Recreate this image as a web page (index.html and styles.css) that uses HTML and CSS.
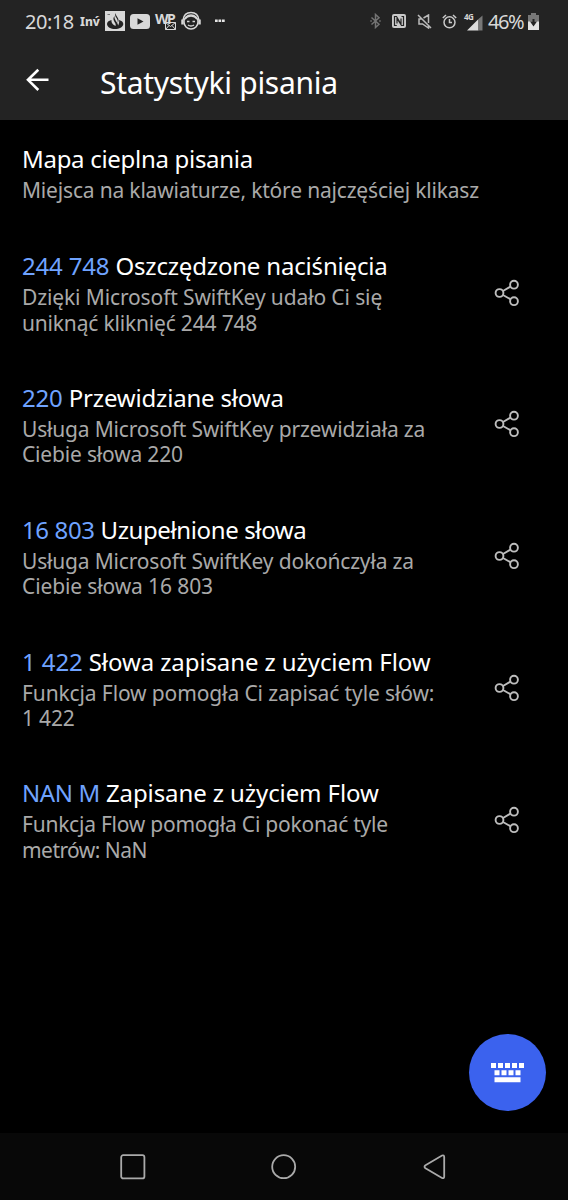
FILE: index.html
```html
<!DOCTYPE html>
<html lang="pl">
<head>
<meta charset="utf-8">
<title>Statystyki pisania</title>
<link rel="stylesheet" href="styles.css">
</head>
<body>
<svg class="defs" width="0" height="0">
  <symbol id="share" viewBox="0 0 26 28">
    <path d="M9 12 16.400 7.600M9 16 16.400 20.200"/>
    <circle cx="5.500" cy="14" r="3.900"/><circle cx="20" cy="5.700" r="3.900"/><circle cx="20" cy="22.200" r="3.900"/>
  </symbol>
</svg>
<div class="screen">
  <header class="top">
    <div class="status">
      <span class="clock">20:18</span>
      <span class="inv">Inv́</span>
      <svg class="app-a" width="20" height="20" viewBox="0 0 20 20"><path fill="#d8d8d8" d="M0 0h20v20H0z"/><path fill="#232323" d="M6.500 9C3.500 9.800 2 11 2 13c0 3 4 5 8 5s8.300-2 8.300-5c0-2-1.500-3.200-4.300-4 .5 2 0 3.500-.8 5.500C12.500 11 9 9 9.500 5 8 7 8 8.500 9.500 11c1 1.500 1.500 2.500 1 4-2-1-4.500-3-4-6z"/><path fill="#232323" d="M10.500 2c-1 2.500.3 4 1.300 5.500 1 1.500 1.200 3 .9 4.500 1.300-2 1-3.500 0-5.200-1-1.800-2-3-2.200-4.800z"/><path stroke="#777" d="M2.500 3.500h2.500"/></svg>
      <svg class="app-b" width="20" height="15" viewBox="0 0 20 15"><rect width="20" height="15" rx="3.500" fill="#d8d8d8"/><path fill="#232323" d="M7.500 4.300v6.400l6-3.200z"/></svg>
      <span class="wp"><b>WP</b><svg width="11" height="8" viewBox="0 0 11 8"><path fill="#232323" stroke="#d8d8d8" d="M.5.5h10v7H.5zL5.500 4.500 10.500.5M.5 7.500 4 3.500M10.500 7.500 7 3.500"/></svg></span>
      <svg class="face" width="20" height="20" viewBox="0 0 20 20" fill="none" stroke="#d8d8d8" stroke-width="1.500"><circle cx="10" cy="11" r="7"/><path d="M2 9Q3 1.500 10 1.500T18 9M4 8q2-3 6-3t6 3M6 10.500h2.500M11.500 10.500H14M7 14q3 2 6 0"/><path stroke-width="2.500" d="M1.500 8.500v5M18.500 8.500v5"/></svg>
      <svg class="more" width="10" height="4" viewBox="0 0 10 4" fill="#e5e5e5"><path d="M0 .5h2.700V3H0zM3.500.5h2.700V3H3.500zM7 .5h2.700V3H7z"/></svg>
      <div class="tray">
        <svg width="11" height="16" viewBox="0 0 11 16" fill="none" stroke="#747474" stroke-width="1.500"><path d="M1.500 4.500 9 11.300 5.500 14.500v-13L9 4.700 1.500 11.500M.3 8h1.500M9.200 8h1.500"/></svg>
        <svg class="nfc" width="14" height="14" viewBox="0 0 14 14"><rect width="14" height="14" rx="2" fill="#c9c9c9"/><path fill="none" stroke="#232323" stroke-width="1.200" d="M4.800 11.500H2.500v-9h2l4.500 7.500V4.500M9.500 2.500h2v9h-2L5 4.500V9.500"/></svg>
        <svg class="mute" width="15" height="15" viewBox="0 0 15 15" fill="none" stroke="#bbb" stroke-width="1.500"><path d="M1 1 14 14M4.500 5H2v5h3.500l6 4v-3M6.500 4l5-3v8"/></svg>
        <svg class="alarm" width="15" height="15" viewBox="0 0 15 15" fill="none" stroke="#c9c9c9" stroke-width="1.500"><circle cx="7.500" cy="8.300" r="5.500"/><path d="M.8 4 4 1M11 1l3.200 3M7.500 5v3.500H10"/></svg>
        <div class="signal"><span>4G</span><svg width="16" height="13" viewBox="0 0 16 13"><path fill="#ddd" d="M0 12.500 11.500 1v11.500z"/><path fill="#777" d="M11.500 1 15.500-2.500v15h-4z"/></svg></div>
        <span class="pct">46%</span>
        <svg class="battery" width="11" height="17" viewBox="0 0 11 17"><path fill="#777" d="M3 0h5v2h3v7H0V2h3z"/><path fill="#e1e1e1" d="M0 8.500h11V17H0z"/><path fill="#232323" d="M4.500 6h2v2.500H9L5.500 13.500 2 8.500h2.500z"/></svg>
      </div>
    </div>
    <div class="bar">
      <svg class="back" width="24" height="24" viewBox="0 0 24 24"><path d="M22.500 11.800H2M12.300 1.800 2 11.800 12.300 22"/></svg>
      <h1>Statystyki pisania</h1>
    </div>
  </header>
  <main>
    <section class="row first"><div><h2 class="snug">Mapa cieplna pisania</h2><p>Miejsca na klawiaturze, które najczęściej klikasz</p></div></section>
    <section class="row"><div><h2><em>244 748</em> Oszczędzone naciśnięcia</h2><p><span class="loose">Dzięki Microsoft SwiftKey udało Ci się</span><br>uniknąć kliknięć 244 748</p></div><svg class="share"><use href="#share"/></svg></section>
    <section class="row"><div><h2><em>220</em> Przewidziane słowa</h2><p>Usługa Microsoft SwiftKey przewidziała za<br>Ciebie słowa 220</p></div><svg class="share"><use href="#share"/></svg></section>
    <section class="row"><div><h2 class="tight"><em>16 803</em> Uzupełnione słowa</h2><p>Usługa Microsoft SwiftKey dokończyła za<br><span class="loose">Ciebie słowa 16 803</span></p></div><svg class="share"><use href="#share"/></svg></section>
    <section class="row"><div><h2 class="loose"><em>1 422</em> Słowa zapisane z użyciem Flow</h2><p><span class="loose">Funkcja Flow pomogła Ci zapisać tyle słów:</span><br>1 422</p></div><svg class="share"><use href="#share"/></svg></section>
    <section class="row"><div><h2 class="loose"><em class="nan">NAN M</em> Zapisane z użyciem Flow</h2><p><span class="snug">Funkcja Flow pomogła Ci pokonać tyle</span><br><span class="tight">metrów: NaN</span></p></div><svg class="share"><use href="#share"/></svg></section>
  </main>
  <div class="fab"><svg width="34" height="20" viewBox="0 0 34 20" fill="#fff"><path d="M0 0h5v5H0zM7 0h5v5H7zM14 0h5v5h-5zM21 0h5v5h-5zM28 0h5v5h-5zM3.500 7.200h5v5h-5zM10.500 7.200h5v5h-5zM17.500 7.200h5v5h-5zM24.500 7.200h5v5h-5zM3.500 14.300h26v5h-26z"/></svg></div>
  <nav>
    <svg width="26" height="26" viewBox="0 0 26 26"><rect x="1.200" y="1.200" width="23.200" height="23.200" rx="2"/></svg>
    <svg width="26" height="26" viewBox="0 0 26 26"><circle cx="12.700" cy="12.700" r="11.500"/></svg>
    <svg width="26" height="26" viewBox="0 0 26 26"><path d="M4.500 11.200 21 1.500Q23.200.8 23.200 3V22.500Q23.200 24.800 21 24L4.500 14.300Q2.500 12.700 4.500 11.200z"/></svg>
  </nav>
</div>
</body>
</html>
```
FILE: styles.css
```css
body { margin: 0; background: #000; font-family: "Noto Sans", "Open Sans", sans-serif; color: #fff; }
svg { display: block; flex: none; }
.defs { position: absolute; }
.screen { position: relative; width: 568px; height: 1200px; display: flex; flex-direction: column; overflow: hidden; }
.top { height: 120px; background: #232323; flex: none; }
.status { height: 42px; display: flex; align-items: center; padding: 0 29px 0 25px; box-sizing: border-box; color: #d8d8d8; white-space: nowrap; }
.clock { font-size: 20px; letter-spacing: -.5px; width: 55px; }
.inv { font-size: 12px; font-weight: 800; width: 25px; }
.app-b { margin-left: 5px; }
.wp { position: relative; width: 21px; height: 18px; margin-left: 5px; }
.wp b { display: block; font-size: 14px; line-height: 13px; letter-spacing: -1.5px; }
.wp svg { position: absolute; right: 0; bottom: 0; }
.face { margin-left: 5px; }
.more { margin-left: 14px; }
.tray { display: flex; align-items: center; margin-left: auto; }
.nfc { margin-left: 11px; }
.mute { margin-left: 11px; }
.alarm { margin-left: 10px; }
.signal { position: relative; width: 18px; height: 19px; margin-left: 8px; display: flex; align-items: flex-end; justify-content: flex-end; }
.signal svg { overflow: visible; }
.signal span { position: absolute; left: -1px; top: 0; font-size: 8px; line-height: 10px; font-weight: 700; letter-spacing: -.5px; }
.pct { font-size: 20px; letter-spacing: -1.4px; width: 34px; margin-left: 5px; }
.battery { margin-left: 6px; }
.bar { height: 78px; display: flex; align-items: center; padding-left: 26px; }
.back { fill: none; stroke: #fff; stroke-width: 2.6; margin-bottom: 2px; }
h1 { margin: 4px 0 0 50px; font-size: 30px; font-weight: 400; line-height: 40px; letter-spacing: -.28px; white-space: nowrap; }
main { flex: 1; }
.row { height: 131.8px; display: flex; justify-content: space-between; align-items: center; padding: 0 48px 0 22px; }
.row.first { height: 106.8px; align-items: flex-start; }
.first div { padding-top: 23px; }
h2 { margin: 0 0 3px; font-size: 24px; font-weight: 400; line-height: 32px; letter-spacing: -.18px; white-space: nowrap; }
h2.snug { letter-spacing: -.3px; }
h2.tight { letter-spacing: -.38px; }
h2.loose { letter-spacing: -.1px; }
em { font-style: normal; color: #6fa3ff; }
.nan { letter-spacing: -.4px; }
p { margin: 0 0 -1px; font-size: 21px; line-height: 25.4px; letter-spacing: -.18px; color: #a9a9a9; white-space: nowrap; }
p .loose { letter-spacing: -.12px; }
p .snug { letter-spacing: -.24px; }
p .tight { letter-spacing: -.55px; }
.share { width: 26px; height: 28px; fill: none; stroke: #bdbdbd; stroke-width: 1.9; }
.fab { position: absolute; left: 469px; top: 1034px; width: 77px; height: 77px; border-radius: 50%; background: #3b62ee; display: flex; align-items: center; justify-content: center; }
nav { height: 67px; flex: none; background: #080808; display: flex; justify-content: space-between; align-items: center; padding: 0 121px 0 120px; }
nav svg { fill: none; stroke: #aaa; stroke-width: 1.8; }
```
